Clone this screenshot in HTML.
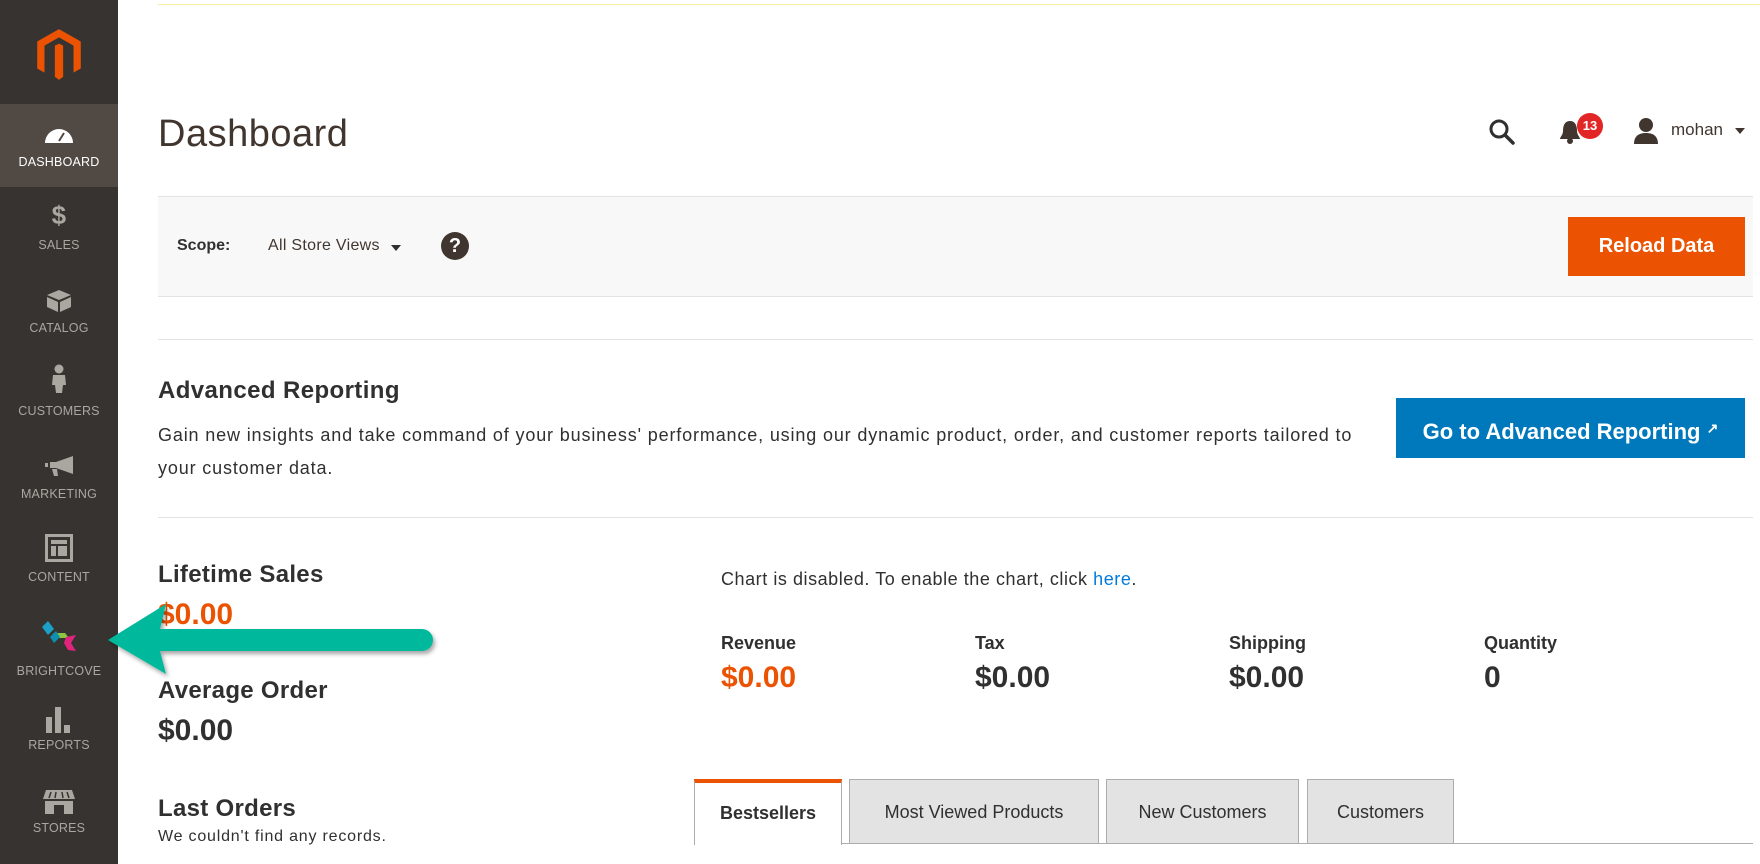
<!DOCTYPE html>
<html><head><meta charset="utf-8"><style>
*{box-sizing:border-box;margin:0;padding:0}
body{width:1760px;height:864px;overflow:hidden;background:#fff;font-family:"Liberation Sans",sans-serif;color:#303030;position:relative}
.sb{position:absolute;left:0;top:0;width:118px;height:864px;background:#373330}
.act{position:absolute;left:0;top:104px;width:118px;height:83px;background:#514943}
.nl{position:absolute;left:0;width:118px;text-align:center;color:#aaa6a0;font-size:12.5px;letter-spacing:.2px}
.ab{position:absolute}
.t{position:absolute;white-space:nowrap}
</style></head><body>
<div class="sb"></div><div class="act"></div>
<svg class="ab" style="left:33px;top:27px" width="52" height="56" viewBox="0 0 48 54"><path d="M24 2 L45 14 V40 L38 44 V18 L24 10 L10 18 V44 L3 40 V14Z M20 18 L24 16 L28 18 V48 L24 51 L20 48Z" fill="#eb5202"/></svg>
<svg class="ab" style="left:44px;top:126px" width="30" height="18" viewBox="0 0 30 18"><path d="M1 17 A14 14 0 0 1 29 17Z" fill="#fff"/><path d="M15 15 L20 7" stroke="#514943" stroke-width="2"/></svg>
<div class="nl" style="top:155px;color:#fff">DASHBOARD</div>
<div class="nl" style="top:200px;font-size:26px;font-weight:bold;color:#aaa6a0">$</div>
<div class="nl" style="top:238px">SALES</div>
<svg class="ab" style="left:46px;top:289px" width="26" height="24" viewBox="0 0 26 24"><path d="M13 1 L25 6 L13 11 L1 6Z M1 8 L12 13 V23 L1 18Z M14 13 L25 8 V18 L14 23Z" fill="#aaa6a0"/></svg>
<div class="nl" style="top:321px">CATALOG</div>
<svg class="ab" style="left:50px;top:364px" width="18" height="30" viewBox="0 0 18 30"><circle cx="9" cy="5" r="4.5" fill="#aaa6a0"/><path d="M3 11 H15 L16 21 H13 L12 29 H6 L5 21 H2Z" fill="#aaa6a0"/></svg>
<div class="nl" style="top:404px">CUSTOMERS</div>
<svg class="ab" style="left:44px;top:455px" width="30" height="22" viewBox="0 0 30 22"><path d="M6 7 H12 L29 1 V19 L12 13 H6Z M1 8 H4 V12 H1Z M8 14 H13 L14 21 H10Z" fill="#aaa6a0"/></svg>
<div class="nl" style="top:487px">MARKETING</div>
<svg class="ab" style="left:45px;top:534px" width="28" height="28" viewBox="0 0 28 28"><rect x="1.5" y="1.5" width="25" height="25" fill="none" stroke="#aaa6a0" stroke-width="3"/><rect x="6" y="6" width="16" height="4" fill="#aaa6a0"/><rect x="6" y="12" width="5" height="10" fill="#aaa6a0"/><rect x="13" y="12" width="9" height="10" fill="#aaa6a0"/></svg>
<div class="nl" style="top:570px">CONTENT</div>
<svg class="ab" style="left:40px;top:619px" width="38" height="36" viewBox="0 0 38 36"><path d="M2 8 L8 2 L14 10 L8 16Z" fill="#1ba1c7"/><path d="M13 14 L25 14 L29 19 L17 19Z" fill="#8cc63e"/><path d="M10 18 L16 12 L20 18 L14 24Z" fill="#0f8fb0"/><path d="M26 18 L36 16 L31 24 L36 32 L28 31 L24 24Z" fill="#e0247e"/></svg>
<div class="nl" style="top:664px">BRIGHTCOVE</div>
<svg class="ab" style="left:45px;top:705px" width="28" height="28" viewBox="0 0 28 28"><rect x="1" y="12" width="6" height="16" fill="#aaa6a0"/><rect x="10" y="2" width="6" height="26" fill="#aaa6a0"/><rect x="19" y="20" width="6" height="8" fill="#aaa6a0"/></svg>
<div class="nl" style="top:738px">REPORTS</div>
<svg class="ab" style="left:42px;top:789px" width="34" height="26" viewBox="0 0 34 26"><path d="M4 1 H30 L33 10 H1Z" fill="#aaa6a0"/><path d="M3 12 H31 V25 H3Z" fill="#aaa6a0"/><rect x="12" y="16" width="10" height="9" fill="#373330"/><path d="M9 3 L7 9 M14 3 L13 9 M20 3 L21 9 M25 3 L27 9" stroke="#373330" stroke-width="1.5"/></svg>
<div class="nl" style="top:821px">STORES</div>

<div class="ab" style="left:158px;top:4px;width:1602px;height:1px;background:#f8eea0"></div>
<div class="t" style="left:158px;top:113px;font-size:38px;color:#41362f;letter-spacing:.5px">Dashboard</div>
<svg class="ab" style="left:1488px;top:118px" width="28" height="28" viewBox="0 0 28 28"><circle cx="11" cy="11" r="8" fill="none" stroke="#303030" stroke-width="3"/><path d="M17 17 L25 25" stroke="#303030" stroke-width="3.5" stroke-linecap="round"/></svg>
<svg class="ab" style="left:1558px;top:119px" width="24" height="26" viewBox="0 0 24 26"><path d="M12 2 C6 2 5 8 5 12 C5 16 2 18 2 20 H22 C22 18 19 16 19 12 C19 8 18 2 12 2Z" fill="#41362f"/><circle cx="12" cy="22" r="3" fill="#41362f"/></svg>
<div class="ab" style="left:1577px;top:113px;width:26px;height:26px;border-radius:50%;background:#e22626;color:#fff;font-size:13px;font-weight:bold;text-align:center;line-height:26px">13</div>
<svg class="ab" style="left:1632px;top:117px" width="28" height="28" viewBox="0 0 28 28"><circle cx="14" cy="8" r="7" fill="#41362f"/><path d="M2 27 C2 18 8 16 14 16 C20 16 26 18 26 27Z" fill="#41362f"/></svg>
<div class="t" style="left:1671px;top:120px;font-size:17px;color:#41362f">mohan</div>
<div class="ab" style="left:1735px;top:128px;border:5px solid transparent;border-top:6px solid #41362f"></div>

<div class="ab" style="left:158px;top:196px;width:1595px;height:101px;background:#f8f8f8;border-top:1px solid #e3e3e3;border-bottom:1px solid #e3e3e3"></div>
<div class="t" style="left:177px;top:237px;font-size:16px;font-weight:bold;color:#303030">Scope:</div>
<div class="t" style="left:268px;top:237px;font-size:16px;color:#41362f;letter-spacing:.3px">All Store Views</div>
<div class="ab" style="left:391px;top:245px;border:5px solid transparent;border-top:6px solid #303030"></div>
<div class="ab" style="left:441px;top:232px;width:28px;height:28px;border-radius:50%;background:#41362f;color:#fff;font-weight:bold;font-size:20px;text-align:center;line-height:28px">?</div>
<div class="ab" style="left:1568px;top:217px;width:177px;height:59px;background:#eb5202;color:#fff;font-size:20px;font-weight:bold;text-align:center;line-height:59px">Reload Data</div>

<div class="ab" style="left:158px;top:339px;width:1595px;height:1px;background:#e3e3e3"></div>
<div class="t" style="left:158px;top:377px;font-size:24px;font-weight:bold;color:#303030;letter-spacing:.4px">Advanced Reporting</div>
<div class="t" style="left:158px;top:425px;font-size:18px;color:#303030;letter-spacing:.85px">Gain new insights and take command of your business' performance, using our dynamic product, order, and customer reports tailored to</div>
<div class="t" style="left:158px;top:458px;font-size:18px;color:#303030;letter-spacing:.85px">your customer data.</div>
<div class="ab" style="left:1396px;top:398px;width:349px;height:60px;background:#0079bc;color:#fff;font-size:22px;font-weight:bold;text-align:center;line-height:60px">Go to Advanced Reporting <span style="font-size:14px;vertical-align:6px">&#x2197;</span></div>
<div class="ab" style="left:158px;top:517px;width:1595px;height:1px;background:#e3e3e3"></div>

<div class="t" style="left:158px;top:561px;font-size:24px;font-weight:bold;letter-spacing:.3px">Lifetime Sales</div>
<div class="t" style="left:158px;top:598px;font-size:30px;font-weight:bold;color:#eb5202">$0.00</div>
<div class="t" style="left:158px;top:677px;font-size:24px;font-weight:bold;letter-spacing:.3px">Average Order</div>
<div class="t" style="left:158px;top:714px;font-size:30px;font-weight:bold">$0.00</div>
<div class="t" style="left:158px;top:795px;font-size:24px;font-weight:bold;letter-spacing:.3px">Last Orders</div>
<div class="t" style="left:158px;top:828px;font-size:16px;letter-spacing:.8px">We couldn't find any records.</div>

<div class="t" style="left:721px;top:569px;font-size:18px;letter-spacing:.55px">Chart is disabled. To enable the chart, click <span style="color:#007bdb">here</span>.</div>
<div class="t" style="left:721px;top:633px;font-size:18px;font-weight:bold">Revenue</div>
<div class="t" style="left:975px;top:633px;font-size:18px;font-weight:bold">Tax</div>
<div class="t" style="left:1229px;top:633px;font-size:18px;font-weight:bold">Shipping</div>
<div class="t" style="left:1484px;top:633px;font-size:18px;font-weight:bold">Quantity</div>
<div class="t" style="left:721px;top:661px;font-size:30px;font-weight:bold;color:#eb5202">$0.00</div>
<div class="t" style="left:975px;top:661px;font-size:30px;font-weight:bold">$0.00</div>
<div class="t" style="left:1229px;top:661px;font-size:30px;font-weight:bold">$0.00</div>
<div class="t" style="left:1484px;top:661px;font-size:30px;font-weight:bold">0</div>

<div class="ab" style="left:694px;top:843px;width:1059px;height:1px;background:#adadad"></div>
<div class="ab" style="left:694px;top:779px;width:148px;height:66px;background:#fff;border:1px solid #adadad;border-top:4px solid #eb5202;border-bottom:none;font-size:18px;font-weight:bold;text-align:center;line-height:60px">Bestsellers</div>
<div class="ab" style="left:849px;top:779px;width:250px;height:65px;background:#e3e3e3;border:1px solid #adadad;font-size:18px;text-align:center;line-height:65px">Most Viewed Products</div>
<div class="ab" style="left:1106px;top:779px;width:193px;height:65px;background:#e3e3e3;border:1px solid #adadad;font-size:18px;text-align:center;line-height:65px">New Customers</div>
<div class="ab" style="left:1307px;top:779px;width:147px;height:65px;background:#e3e3e3;border:1px solid #adadad;font-size:18px;text-align:center;line-height:65px">Customers</div>

<svg class="ab" style="left:100px;top:596px" width="340" height="90" viewBox="0 0 340 90"><defs><filter id="s"><feDropShadow dx="2" dy="3" stdDeviation="2" flood-opacity=".35"/></filter></defs><path d="M8 44 L66 8 L60 33 H322 A11 11 0 0 1 322 55 H60 L66 78Z" fill="#00b89c" filter="url(#s)"/></svg>
</body></html>
